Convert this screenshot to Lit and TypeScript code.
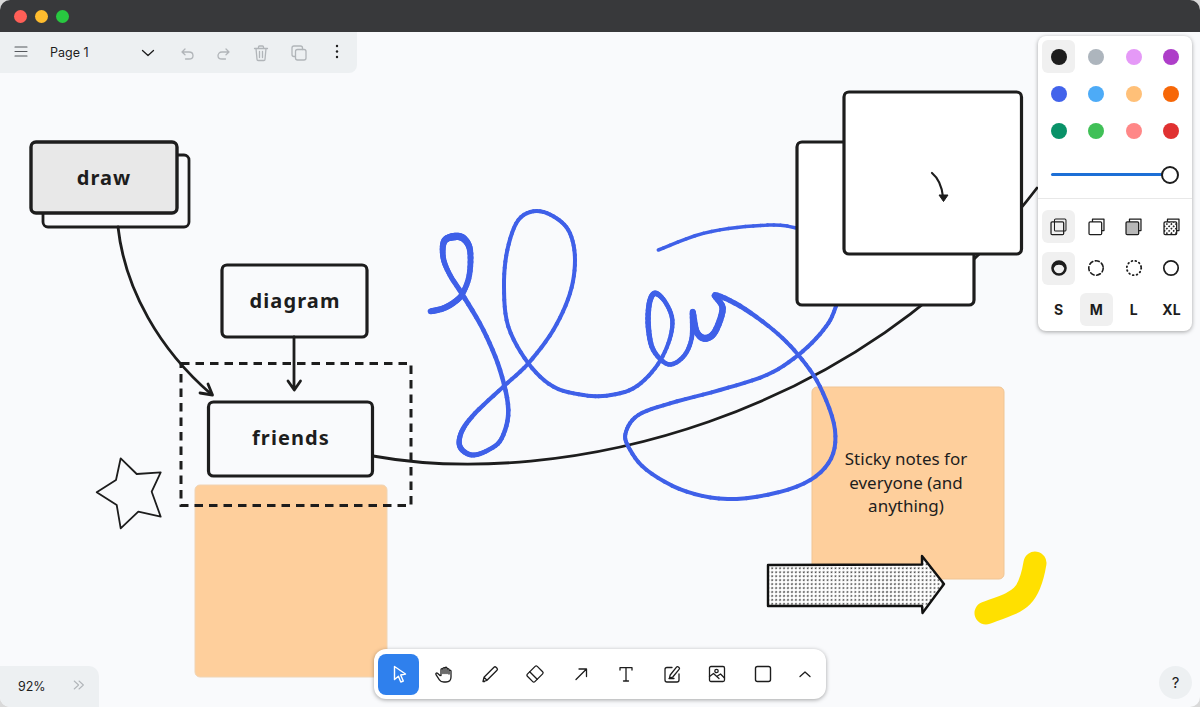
import { LitElement, html, svg, css } from 'lit';
import { customElement } from 'lit/decorators.js';

type Pt = [number, number, number?];

// zoom crops were read at 3x from (420,200), so scribble points stay in that space
const fromZoom = (pts: Pt[]): Pt[] => pts.map(([x, y, w]) => [420 + x / 3, 200 + y / 3, w]);

const SCRIBBLE: Pt[] = fromZoom([
  [32, 334, 6], [70, 325, 6], [105, 305, 6], [128, 280, 5.5], [148, 225, 5.5], [150, 150, 6], [130, 115, 7],
  [100, 110, 7.5], [72, 125, 6.5], [70, 175, 5.5], [90, 225, 5], [125, 280, 5], [190, 390, 4.5], [240, 510, 4.5],
  [265, 630, 4.5], [245, 715, 4.5], [205, 750, 4.5], [155, 765, 5], [120, 740, 5.5], [125, 695, 5], [165, 640, 4.5],
  [250, 560, 4], [325, 490, 4], [400, 390, 4], [450, 280, 4], [465, 180, 4], [450, 100, 4],
  [410, 55, 4], [350, 33, 4], [295, 60, 4], [262, 150, 4], [252, 260, 4], [265, 380, 4],
  [325, 490, 4], [400, 560, 4], [490, 585, 4], [560, 587, 4], [640, 565, 4], [705, 505, 4],
  [745, 430, 4], [757, 360, 4.5], [735, 305, 4.5], [705, 280, 5.5], [688, 310, 5.5], [685, 380, 5.5], [700, 450, 5],
  [745, 493, 4.5], [790, 470, 4.5], [815, 415, 4.5], [818, 335, 5.5], [830, 395, 6], [855, 415, 7], [885, 395, 6.5],
  [908, 325, 6.5], [885, 285, 5.5], [960, 318, 5], [1060, 390, 4], [1135, 465, 4], [1200, 560, 4],
  [1245, 690, 4], [1225, 790, 4], [1130, 860, 4], [950, 897, 4], [800, 875, 4], [680, 810, 4],
  [625, 740, 4], [618, 695, 4], [655, 645, 4], [750, 610, 4], [900, 570, 4], [1040, 525, 4],
  [1135, 465, 4], [1210, 390, 4], [1248, 318, 4], [1290, 150, 4], [1125, 83, 3.5], [1000, 78, 3.5],
  [850, 100, 3.5], [715, 150, 3.5],
]);

const STAR = '120.7,458.3 136.7,474 160.7,472.3 151.7,491.7 160.7,516.7 138.3,511.7 120.7,528.3 116.7,505 96.7,492.3 116,480';

const COLORS = [
  '#1d1d1d', '#adb5bd', '#e599f7', '#ae3ec9',
  '#4263eb', '#4dabf7', '#ffc078', '#f76707',
  '#099268', '#40c057', '#ff8787', '#e03131',
];

// variable width pen stroke, one short line per sample
function pen(pts: Pt[], color: string) {
  const out = [];
  for (let i = 0; i < pts.length - 1; i++) {
    const a = pts[Math.max(i - 1, 0)];
    const b = pts[i];
    const c = pts[i + 1];
    const e = pts[Math.min(i + 2, pts.length - 1)];
    let px = b[0];
    let py = b[1];
    for (let s = 1; s <= 6; s++) {
      const t = s / 6;
      const t2 = t * t;
      const t3 = t2 * t;
      const at = (p0: number, p1: number, p2: number, p3: number) =>
        0.5 * (2 * p1 + (p2 - p0) * t + (2 * p0 - 5 * p1 + 4 * p2 - p3) * t2 + (3 * p1 - p0 - 3 * p2 + p3) * t3);
      const x = at(a[0], b[0], c[0], e[0]);
      const y = at(a[1], b[1], c[1], e[1]);
      const w = (b[2] ?? 3) + ((c[2] ?? 3) - (b[2] ?? 3)) * t;
      out.push(svg`<line x1=${px} y1=${py} x2=${x} y2=${y} stroke=${color} stroke-width=${w} stroke-linecap="round" />`);
      px = x;
      py = y;
    }
  }
  return out;
}

function box(x: number, y: number, w: number, h: number, fill: string, sw = 3.2) {
  return svg`<rect x=${x} y=${y} width=${w} height=${h} rx="5" fill=${fill} stroke="#1d1d1d" stroke-width=${sw} />`;
}

function icon(body: unknown, size = 20) {
  return html`<svg width=${size} height=${size} viewBox="0 0 20 20" fill="none" stroke="currentColor" stroke-width="1.3" stroke-linecap="round" stroke-linejoin="round">${body}</svg>`;
}

@customElement('app-root')
export class AppRoot extends LitElement {
  static styles = css`
    :host {
      display: block;
      width: 1200px;
      height: 707px;
      overflow: hidden;
      background: #d9d9d9;
      font-family: Inter, 'Liberation Sans', sans-serif;
    }

    .window {
      height: 707px;
      display: flex;
      flex-direction: column;
      border-radius: 10px;
      overflow: hidden;
      background: #f9fafc;
    }

    .titlebar {
      flex: none;
      height: 32px;
      display: flex;
      align-items: center;
      gap: 8px;
      padding: 0 14px;
      background: #38393b;
    }

    .light {
      width: 13px;
      height: 13px;
      border-radius: 50%;
    }

    .canvas {
      position: relative;
      flex: 1;
    }

    .drawing {
      position: absolute;
      inset: 0;
    }

    .label {
      font-family: 'Noto Sans', sans-serif;
      font-weight: 700;
      font-size: 20px;
      letter-spacing: 1.1px;
      fill: #1d1d1d;
      text-anchor: middle;
    }

    .note {
      font-family: 'Noto Sans', sans-serif;
      font-size: 17px;
      fill: #1d1d1d;
      text-anchor: middle;
    }

    .menu {
      position: absolute;
      top: 0;
      left: 0;
      width: 357px;
      height: 41px;
      display: flex;
      align-items: center;
      background: #edf0f2;
      border-bottom-right-radius: 8px;
      color: #1d1d1d;
    }

    .menu svg {
      flex: none;
    }

    .burger {
      margin-left: 11px;
      color: #55585c;
    }

    .page {
      width: 88px;
      margin-left: 19px;
      font-size: 12.5px;
      color: #1d1d1d;
    }

    .muted {
      color: #b1b5b9;
    }

    .actions {
      display: flex;
      align-items: center;
      gap: 17.2px;
      margin-left: 19px;
    }

    .kebab {
      margin-left: 18px;
    }

    .style-panel {
      position: absolute;
      top: 4px;
      right: 8px;
      width: 154px;
      height: 295px;
      box-sizing: border-box;
      background: #fff;
      border-radius: 8px;
      box-shadow: 0 1px 4px rgba(0, 0, 0, 0.35);
    }

    .grid {
      display: grid;
      grid-template-columns: repeat(4, 33px);
      justify-content: space-between;
      padding: 4px;
    }

    .colors {
      row-gap: 4px;
    }

    .styles {
      padding-top: 11px;
      row-gap: 8.5px;
    }

    .cell {
      width: 33px;
      height: 33px;
      display: flex;
      align-items: center;
      justify-content: center;
      border-radius: 6px;
      font-weight: 700;
      font-size: 14px;
      color: #1d1d1d;
    }

    .cell.on {
      background: #f0f0f0;
    }

    .dot {
      width: 16px;
      height: 16px;
      border-radius: 50%;
    }

    .slider {
      position: relative;
      height: 47px;
      border-bottom: 1px solid #e8e8e8;
    }

    .track {
      position: absolute;
      left: 13px;
      right: 22px;
      top: 22px;
      height: 3px;
      border-radius: 2px;
      background: #1d6fd6;
    }

    .thumb {
      position: absolute;
      left: 123px;
      top: 15px;
      width: 14px;
      height: 14px;
      border: 2px solid #1d1d1d;
      border-radius: 50%;
      background: #fff;
    }

    .tools {
      position: absolute;
      left: 374px;
      bottom: 8px;
      width: 452px;
      height: 50px;
      box-sizing: border-box;
      display: flex;
      align-items: center;
      gap: 4.5px;
      padding: 4px;
      background: #fff;
      border-radius: 12px;
      box-shadow: 0 1px 4px rgba(0, 0, 0, 0.35);
      color: #1d1d1d;
    }

    .tool {
      flex: none;
      width: 41px;
      height: 41px;
      display: flex;
      align-items: center;
      justify-content: center;
      border-radius: 8px;
    }

    .tool.on {
      background: #2f80ed;
      color: #fff;
    }

    .tool.more {
      width: 34.5px;
    }

    .zoom {
      position: absolute;
      left: 0;
      bottom: 0;
      width: 99px;
      height: 41px;
      display: flex;
      align-items: center;
      background: #edf0f2;
      border-top-right-radius: 10px;
      font-size: 12.5px;
      color: #1d1d1d;
    }

    .zoom span {
      width: 53px;
      margin-left: 18px;
    }

    .help {
      position: absolute;
      right: 8px;
      bottom: 8px;
      width: 33px;
      height: 33px;
      display: flex;
      align-items: center;
      justify-content: center;
      border-radius: 50%;
      background: #edf0f2;
      font-size: 15px;
      color: #1d1d1d;
    }
  `;

  drawing() {
    return html`
      <svg class="drawing" width="1200" height="675" viewBox="0 32 1200 675" fill="none">
        <defs>
          <pattern id="hatch" width="5.6" height="5.6" patternUnits="userSpaceOnUse" patternTransform="rotate(45)">
            <rect width="5.6" height="5.6" fill="#fff" />
            <circle cx="1.4" cy="1.4" r="0.85" fill="#1d1d1d" />
            <circle cx="4.2" cy="4.2" r="0.85" fill="#1d1d1d" />
          </pattern>
        </defs>

        <rect x="195" y="485" width="192" height="192" rx="5" fill="#fecf9c" stroke="#f0d4b4" />
        <rect x="812" y="387" width="192" height="192" rx="5" fill="#fecf9c" stroke="#f0c594" />
        <text class="note"><tspan x="906" y="465">Sticky notes for</tspan><tspan x="906" y="489">everyone (and</tspan><tspan x="906" y="512">anything)</tspan></text>

        ${box(43, 155, 146, 72, 'none', 2.8)}
        ${box(31, 142, 146, 71, '#e8e8e8', 3.4)}
        <text class="label" x="104" y="185">draw</text>

        <path d="M118 227C125 290 160 350 211 394" stroke="#1d1d1d" stroke-width="2.8" stroke-linecap="round" />
        <path d="M200 393 212.5 395 208 384" stroke="#1d1d1d" stroke-width="2.8" stroke-linecap="round" stroke-linejoin="round" />

        ${box(222, 265, 145, 72, 'none')}
        <text class="label" x="295" y="308">diagram</text>
        <path d="M294 337V389M288 381 294.3 390 300.5 381" stroke="#1d1d1d" stroke-width="2.8" stroke-linecap="round" stroke-linejoin="round" />

        <rect x="181" y="363.5" width="230" height="142" stroke="#1d1d1d" stroke-width="3" stroke-dasharray="8.5 6" />
        ${box(208.5, 402, 164, 74, 'none')}
        <text class="label" x="291" y="445">friends</text>

        <polygon points=${STAR} fill="#f9fafc" stroke="#1d1d1d" stroke-width="1.8" stroke-linejoin="round" />

        <path d="M373 456C560 490 860 420 1037 188" stroke="#1d1d1d" stroke-width="2.8" stroke-linecap="round" />
        ${pen(SCRIBBLE, '#3f60e8')}

        ${box(797, 142, 177, 163, '#fff')}
        ${box(844, 92, 177.5, 162, '#fff')}
        <path d="M932 173C938 178 942 187 943 197" stroke="#1d1d1d" stroke-width="2.2" stroke-linecap="round" />
        <polygon points="939,195 948,195 943.5,201.5" fill="#1d1d1d" stroke="#1d1d1d" stroke-linejoin="round" />

        <polygon points="768,565 922,564.5 922,556 944,584 922.5,613 922,606 768,606" fill="url(#hatch)" stroke="#111" stroke-width="2.4" stroke-linejoin="round" />

        <path d="M986 613C1005 606 1015 603 1022 596C1030 588 1033 575 1035 563" stroke="#ffe000" stroke-width="23" stroke-linecap="round" stroke-linejoin="round" />
      </svg>
    `;
  }

  menu() {
    return html`
      <div class="menu">
        <div class="burger">${icon(svg`<path d="M4 6H16M4 10.5H16M4 15H16" stroke-width="1.1" />`)}</div>
        <div class="page">Page 1</div>
        ${icon(svg`<path d="M4.5 7.5 10 12.5 15.5 7.5" />`)}
        <div class="actions muted">
          ${icon(svg`<path d="M5 9H12C14.5 9 16 10.7 16 12.7C16 14.7 14.5 16 12 16H8.5M5 9 8 6M5 9 8 11.7" />`)}
          ${icon(svg`<path d="M15 9H8C5.5 9 4 10.7 4 12.7C4 14.7 5.5 16 8 16H11.5M15 9 12 6M15 9 12 11.7" />`)}
          ${icon(svg`<path d="M3.5 5.5H16.5M5 5.5 6 16.3C6 17 6.6 17.5 7.2 17.5H12.8C13.4 17.5 14 17 14 16.3L15 5.5M7.5 5.5V4C7.5 3.3 8 3 8.5 3H11.5C12 3 12.5 3.3 12.5 4V5.5M8.5 8.5V14.5M11.5 8.5V14.5" />`)}
          ${icon(svg`<rect x="6.5" y="6.5" width="10.5" height="10.5" rx="2" /><path d="M13.5 6.5V5C13.5 3.9 12.6 3 11.5 3H5C3.9 3 3 3.9 3 5V11.5C3 12.6 3.9 13.5 5 13.5H6.5" />`)}
        </div>
        <div class="kebab">${icon(svg`<circle cx="10" cy="5" r="1.2" fill="currentColor" stroke="none" /><circle cx="10" cy="10.5" r="1.2" fill="currentColor" stroke="none" /><circle cx="10" cy="16" r="1.2" fill="currentColor" stroke="none" />`)}</div>
      </div>
    `;
  }

  stylePanel() {
    const stack = (fill: string) => svg`
      <path d="M6.5 6V3.5H16.5V13.5H14.5" stroke-width="1.1" />
      <rect x="3.5" y="6" width="11" height="11" rx="1" fill=${fill} stroke-width="1.1" />
    `;
    const hatched = svg`
      <defs><pattern id="hatch-small" width="2.8" height="2.8" patternUnits="userSpaceOnUse" patternTransform="rotate(45)">
        <rect width="2.8" height="2.8" fill="#fff" stroke="none" /><circle cx="1.4" cy="1.4" r="0.8" fill="#1d1d1d" stroke="none" />
      </pattern></defs>
    `;
    return html`
      <div class="style-panel">
        <div class="grid colors">
          ${COLORS.map(
            (c, i) => html`<div class="cell ${i === 0 ? 'on' : ''}"><div class="dot" style="background:${c}"></div></div>`,
          )}
        </div>
        <div class="slider"><div class="track"></div><div class="thumb"></div></div>
        <div class="grid styles">
          <div class="cell on">${icon(svg`
            <rect x="6.5" y="3.5" width="10" height="10.5" rx="1" stroke-width="0.9" />
            <rect x="3.5" y="6" width="11" height="11" rx="1" stroke-width="1.1" />
          `, 23)}</div>
          <div class="cell">${icon(stack('#fff'), 23)}</div>
          <div class="cell">${icon(stack('#b8b8b8'), 23)}</div>
          <div class="cell">${icon(svg`${hatched}${stack('url(#hatch-small)')}`, 23)}</div>
          <div class="cell on">${icon(svg`<circle cx="10" cy="10" r="6.5" stroke-width="2.6" /><path d="M4.5 8.5C6 4.5 14 4.5 15.5 8.5" stroke-width="2.4" />`)}</div>
          <div class="cell">${icon(svg`<circle cx="10" cy="10" r="7.2" stroke-width="1.6" stroke-dasharray="4 2.6" />`)}</div>
          <div class="cell">${icon(svg`<circle cx="10" cy="10" r="7.2" stroke-width="1.8" stroke-dasharray="0.8 3.1" />`)}</div>
          <div class="cell">${icon(svg`<circle cx="10" cy="10" r="7.2" stroke-width="1.7" />`)}</div>
          ${['S', 'M', 'L', 'XL'].map((s) => html`<div class="cell ${s === 'M' ? 'on' : ''}">${s}</div>`)}
        </div>
      </div>
    `;
  }

  toolbar() {
    const tools = [
      svg`<path d="M5.5 2.5 16.5 10 11.7 11 14.3 17 11.8 18 9.4 12.2 5.5 15.5Z" stroke-width="1.4" />`,
      svg`<path d="M6 11.5 3.5 9.3C2.6 8.5 1.3 9.6 2 10.7L5.4 15.8C6.4 17.3 8 18 9.8 18H12C15 18 17 16 17 13V7C17 5.7 15 5.7 15 7M15 10V5.5C15 4.2 13 4.2 13 5.5M13 9.5V4.2C13 2.9 11 2.9 11 4.2V9.5M11 4.5C11 3.2 9 3.2 9 4.5V9.5M9 5.5C9 4.2 7 4.2 7 5.5V11.5" />`,
      svg`<path d="M3 17.5 4 13.3 14 3.2C14.6 2.6 15.4 2.6 16 3.2L17 4.2C17.6 4.8 17.6 5.6 17 6.2L7 16.3ZM4 13.3 7 16.3M3 17.5H4.6" />`,
      svg`<g transform="rotate(-45 10 10)"><rect x="3" y="4.7" width="14" height="10.6" rx="1.5" /><path d="M7.8 4.7V15.3" /></g>`,
      svg`<path d="M5 15.5 15.5 5M8 5H15.5V12.5" />`,
      svg`<path d="M4 6V3.7H16V6M10 3.7V17M7.5 17H12.5" />`,
      svg`<path d="M10 3.5H5C3.9 3.5 3 4.4 3 5.5V16C3 17.1 3.9 18 5 18H15C16.1 18 17 17.1 17 16V10M7.5 14 8.2 11 14.5 3.2C15 2.6 15.8 2.5 16.4 3L17 3.5C17.6 4 17.6 4.8 17.1 5.4L10.8 13ZM7 14.5H12" />`,
      svg`<rect x="2.5" y="2.5" width="15" height="15" rx="1.5" /><circle cx="9.5" cy="7" r="1.7" /><path d="M2.5 12.5 6.5 9.5 12 14.5M10.5 12 13.5 10 17.5 14" />`,
      svg`<rect x="2.5" y="2.5" width="15" height="15" rx="2" stroke-width="1.4" />`,
    ];
    return html`
      <div class="tools">
        ${tools.map((t, i) => html`<div class="tool ${i === 0 ? 'on' : ''}">${icon(t)}</div>`)}
        <div class="tool more">${icon(svg`<path d="M5 12.5 10 8 15 12.5" />`)}</div>
      </div>
    `;
  }

  render() {
    return html`
      <div class="window">
        <div class="titlebar">
          <div class="light" style="background:#ff5f57"></div>
          <div class="light" style="background:#febc2e"></div>
          <div class="light" style="background:#28c840"></div>
        </div>
        <div class="canvas">
          ${this.drawing()} ${this.menu()} ${this.stylePanel()} ${this.toolbar()}
          <div class="zoom">
            <span>92%</span>
            <div class="muted">${icon(svg`<path d="M4 5 9.5 10 4 15M10 5 15.5 10 10 15" />`, 16)}</div>
          </div>
          <div class="help">?</div>
        </div>
      </div>
    `;
  }
}
